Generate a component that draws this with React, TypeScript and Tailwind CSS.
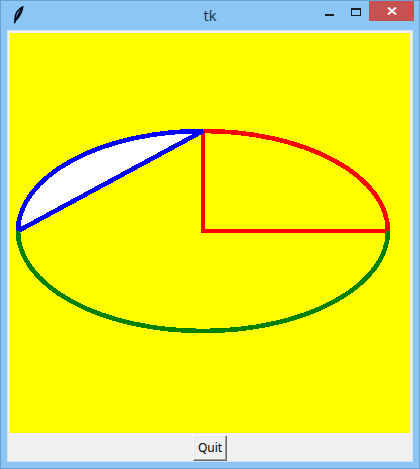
import React from "react";

export default function App() {
  const cx = 195;
  const cy = 200;
  const rx = 185;
  const ry = 100;
  return (
    <div className="w-[420px] h-[469px] bg-[#8cc6f7] border border-[#6e9fd3] flex flex-col overflow-hidden">
      {/* title bar */}
      <div className="relative h-[29px] flex items-start pl-[11px] pr-[5px]">
        <div className="absolute inset-0 flex items-center justify-center pb-[1px]">
          <span className="text-[15px] leading-none text-[#233246] [font-family:'Open_Sans','Noto_Sans',sans-serif]">tk</span>
        </div>
        <svg width="12" height="18" viewBox="0 0 12 18" className="mt-[5px] relative">
          <path d="M10.8 0.8 C 6 3, 2.6 8, 3 14.2 L 4.8 13.4 C 7.8 10, 10.3 5.5, 10.8 0.8 Z" fill="#3f7fd0" stroke="#000" strokeWidth="1.4" />
          <path d="M10 2 L 3.6 14.2 L 2.4 17.2" fill="none" stroke="#000" strokeWidth="1.5" />
        </svg>
        <div className="flex-1" />
        <div className="relative flex items-start">
          <div className="w-[26px] h-[20px] flex items-center justify-center pt-[7px] pr-[1px]">
            <div className="w-[9px] h-[2px] bg-[#1e1e1e]" />
          </div>
          <div className="w-[26px] h-[20px] flex items-center justify-center pt-[2px]">
            <div className="w-[10px] h-[8px] border border-t-2 border-[#1e1e1e]" />
          </div>
          <div className="w-[45px] h-[20px] bg-[#c75050] flex items-center justify-center">
            <svg width="10" height="8" viewBox="0 0 10 8">
              <path d="M1 0.5 L9 7.5 M9 0.5 L1 7.5" stroke="#fff" strokeWidth="2" />
            </svg>
          </div>
        </div>
      </div>
      {/* client area */}
      <div className="mx-[6px] w-[406px] h-[432px] border border-[#d4e5f6] bg-[#f0f0f0] flex flex-col">
        <svg width="404" height="404" viewBox="0 0 404 404" className="block">
          <rect x="2" y="2" width="400" height="400" fill="#ffff00" />
          <path
            d={`M${cx} ${cy} L${cx + rx} ${cy} A${rx} ${ry} 0 0 0 ${cx} ${cy - ry} Z`}
            fill="none"
            stroke="#ff0000"
            strokeWidth="4.6"
            strokeLinejoin="miter"
            shapeRendering="crispEdges"
          />
          <path
            d={`M${cx} ${cy - ry} A${rx} ${ry} 0 0 0 ${cx - rx} ${cy} Z`}
            fill="#ffffff"
            stroke="#0000ff"
            strokeWidth="4.6"
            shapeRendering="crispEdges"
          />
          <path
            d={`M${cx - rx} ${cy} A${rx} ${ry} 0 0 0 ${cx + rx} ${cy}`}
            fill="none"
            stroke="#008000"
            strokeWidth="4.6"
            shapeRendering="crispEdges"
          />
        </svg>
        <div className="h-[26px] flex justify-center">
          <button className="w-[34px] h-[26px] bg-[#f0f0f0] border border-t-white border-l-white border-r-[#696969] border-b-[#696969] shadow-[inset_-1px_-1px_0_#a0a0a0,inset_1px_1px_0_#e3e3e3] text-[12px] leading-none text-black [font-family:'Noto_Sans',sans-serif] flex items-center justify-center">
            Quit
          </button>
        </div>
      </div>
    </div>
  );
}
